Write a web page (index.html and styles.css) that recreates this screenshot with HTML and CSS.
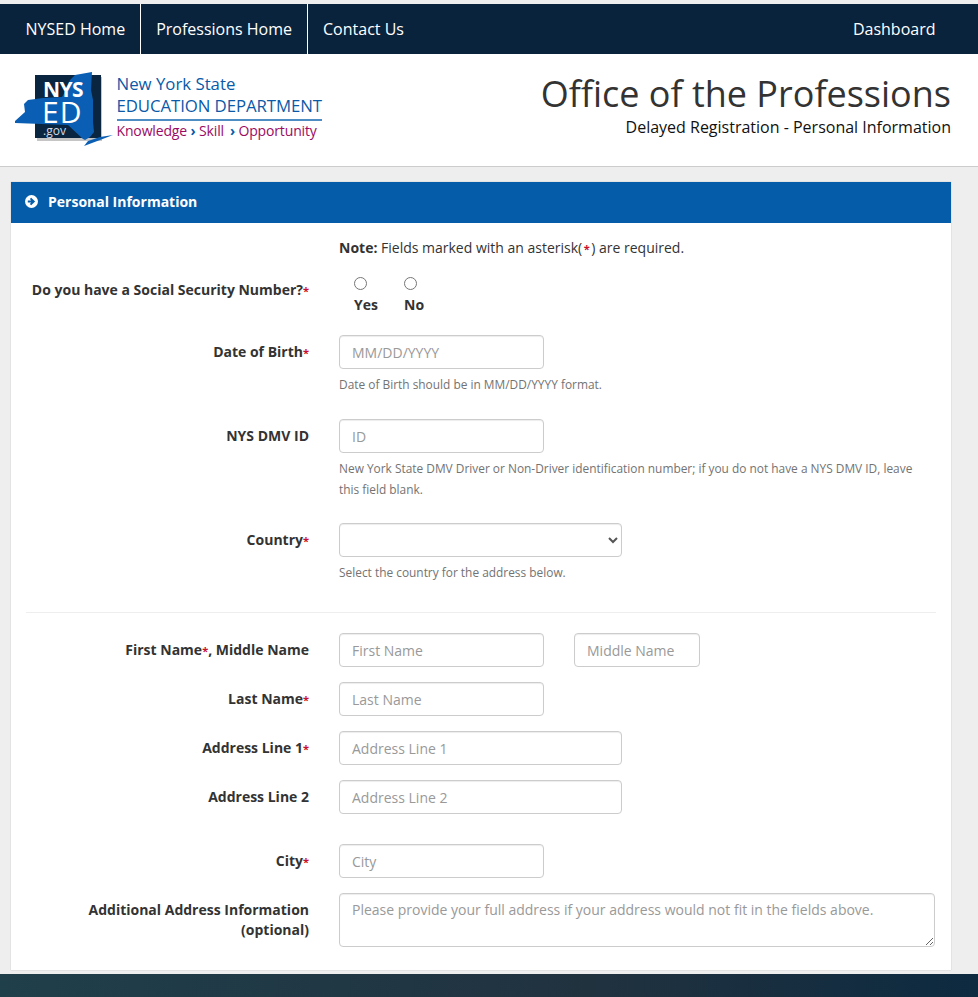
FILE: index.html
```html
<!DOCTYPE html>
<html lang="en">
<head>
<meta charset="utf-8">
<title>Office of the Professions</title>
<link rel="stylesheet" href="styles.css">
</head>
<body>
<nav class="topnav">
  <a class="navlink first" href="#">NYSED Home</a>
  <a class="navlink" href="#">Professions Home</a>
  <a class="navlink plain" href="#">Contact Us</a>
  <a class="navlink plain dash" href="#">Dashboard</a>
</nav>
<header class="masthead">
  <div class="logo">
    <svg class="logo-mark" viewBox="12 68 108 84" width="108" height="84" aria-hidden="true">
      <rect x="37" y="77" width="65" height="64" fill="#8c8c8c" opacity=".5"/>
      <rect x="35" y="75" width="66" height="63" fill="#0a2540"/>
      <path d="M84 146 L100 140 L113 135 L100 137 L88 141 Z" fill="#0a5fb4"/>
      <path d="M15 121 L25 112 L24 104 L28 100 L43 98 L62 97 L66 90 L70 80 L75 75 L92 72 L91 90 L93 100 L93 122 L94 132 L90 137 L85 140 L83 139 L68 125 L15 123 Z" fill="#0a5fb4"/>
      <text x="43" y="97" class="lm-nys">NYS</text>
      <text x="42" y="123" class="lm-ed">ED</text>
      <text x="43" y="135" class="lm-gov">.gov</text>
    </svg>
    <div class="logo-text">
      <div class="lt-1">New York State</div>
      <div class="lt-2">EDUCATION DEPARTMENT</div>
      <div class="lt-3"><span>Knowledge</span><span class="chev">›</span><span>Skill</span><span class="chev gap">›</span><span>Opportunity</span></div>
    </div>
  </div>
  <div class="titles">
    <h1>Office of the Professions</h1>
    <p>Delayed Registration - Personal Information</p>
  </div>
</header>
<main class="card">
  <div class="card-head">
    <svg class="arrow" viewBox="0 0 13 13" width="13" height="13" aria-hidden="true"><circle cx="6.500" cy="6.500" r="6.500" fill="#fff"/><path d="M2.800 5.400h3.400L4.900 4.100l1.300-1.300 3.900 3.700-3.900 3.700-1.300-1.300 1.300-1.300H2.800z" fill="#055ca9"/></svg>
    <span>Personal Information</span>
  </div>
  <form class="card-body">
    <div class="row note-row"><div></div><p class="note"><b>Note:</b> Fields marked with an asterisk(<i class="req">*</i>) are required.</p></div>
    <div class="row ssn-row">
      <div class="lbl">Do you have a Social Security Number?<i class="req">*</i></div>
      <div class="radios">
        <label class="radio"><input type="radio" name="ssn"><span>Yes</span></label>
        <label class="radio"><input type="radio" name="ssn"><span>No</span></label>
      </div>
    </div>
    <div class="row dob-row">
      <div class="lbl">Date of Birth<i class="req">*</i></div>
      <div><input class="ctl w205" placeholder="MM/DD/YYYY"><p class="help">Date of Birth should be in MM/DD/YYYY format.</p></div>
    </div>
    <div class="row dmv-row">
      <div class="lbl">NYS DMV ID</div>
      <div><input class="ctl w205" placeholder="ID"><p class="help">New York State DMV Driver or Non-Driver identification number; if you do not have a NYS DMV ID, leave this field blank.</p></div>
    </div>
    <div class="row country-row">
      <div class="lbl">Country<i class="req">*</i></div>
      <div><select class="ctl w283"><option></option></select><p class="help">Select the country for the address below.</p></div>
    </div>
    <hr class="sep">
    <div class="row name-row">
      <div class="lbl">First Name<i class="req">*</i>, Middle Name</div>
      <div class="pair"><input class="ctl w205" placeholder="First Name"><input class="ctl w126" placeholder="Middle Name"></div>
    </div>
    <div class="row line-row">
      <div class="lbl">Last Name<i class="req">*</i></div>
      <div><input class="ctl w205" placeholder="Last Name"></div>
    </div>
    <div class="row line-row">
      <div class="lbl">Address Line 1<i class="req">*</i></div>
      <div><input class="ctl w283" placeholder="Address Line 1"></div>
    </div>
    <div class="row line-row">
      <div class="lbl">Address Line 2</div>
      <div><input class="ctl w283" placeholder="Address Line 2"></div>
    </div>
    <div class="row city-row">
      <div class="lbl">City<i class="req">*</i></div>
      <div><input class="ctl w205" placeholder="City"></div>
    </div>
    <div class="row addl-row">
      <div class="lbl">Additional Address Information (optional)</div>
      <div><textarea class="ctl area" placeholder="Please provide your full address if your address would not fit in the fields above."></textarea></div>
    </div>
  </form>
</main>
<footer class="foot"></footer>
</body>
</html>
```
FILE: styles.css
```css
* { box-sizing: border-box; }
html, body { margin: 0; height: 997px; overflow: hidden; }
body { background: #eee; font-family: "Open Sans", sans-serif; font-size: 14px; color: #333; padding-top: 4px; display: flex; flex-direction: column; }

.topnav { height: 50px; background: #0a233d; display: flex; flex: none; }
.navlink { color: #fff; text-decoration: none; font-size: 16px; line-height: 50px; padding: 0 15px; border-right: 1px solid #fff; }
.navlink.first { padding-left: 25.500px; }
.navlink.plain { border-right: 0; }
.navlink.dash { margin-left: auto; margin-right: 27.500px; }

.masthead { height: 113px; flex: none; background: #fff; border-bottom: 1px solid #ccc; display: flex; justify-content: space-between; padding: 14px 27px 0 12px; }
.logo { display: flex; align-items: flex-start; }
.logo-mark { display: block; flex: none; }
.lm-nys { font-family: "Open Sans", sans-serif; font-weight: 700; font-size: 21px; fill: #fff; letter-spacing: -.6px; }
.lm-ed { font-family: "Open Sans", sans-serif; font-size: 30px; fill: #fff; letter-spacing: 1px; }
.lm-gov { font-family: "Open Sans", sans-serif; font-size: 12px; fill: #d5dbe2; }
.logo-text { margin: 5px 0 0 -3.500px; color: #0a5aa8; }
.lt-1 { font-size: 16.800px; line-height: 21px; }
.lt-2 { font-size: 16.800px; line-height: 23px; border-bottom: 2px solid #4e8cc4; padding-bottom: 2px; white-space: nowrap; letter-spacing: -.08px; }
.lt-3 { font-size: 14px; line-height: 19px; color: #9b0a63; white-space: nowrap; letter-spacing: -.15px; }
.chev { color: #0a5aa8; font-weight: 700; margin: 0 3.500px; }
.chev.gap { margin: 0 3.500px 0 6px; }
.titles { text-align: right; }
.titles h1 { margin: 1px 0 0; font-size: 36px; font-weight: 400; line-height: 50px; color: #333; }
.titles p { margin: -2px 0 0; font-size: 16px; line-height: 20px; color: #111; }

.card { flex: none; width: 940px; height: 788px; margin: 15px 0 0 11px; background: #fff; box-shadow: 0 0 1px rgba(0,0,0,.25); }
.card-head { height: 41px; background: #055ca9; color: #fff; font-weight: 700; display: flex; align-items: center; gap: 10px; padding-left: 14px; padding-bottom: 2px; }
.arrow { display: block; }
.card-body { padding: 0 15px; }

.row { display: grid; grid-template-columns: 283px 1fr; column-gap: 30px; }
.lbl { font-weight: 700; text-align: right; color: #333; line-height: 20px; padding-top: 7px; }
.req { color: #c8102e; font-style: normal; font-weight: 700; display: inline-block; font-size: 11px; width: 6px; text-align: center; }
.note-row { padding-top: 15px; height: 46px; }
.note { margin: 0; line-height: 20px; }
.note .req { width: 9px; }
.ssn-row { height: 66px; }
.ssn-row .lbl { padding-top: 11px; }
.radios { display: flex; gap: 10px; padding-top: 8px; }
.radio { display: flex; flex-direction: column; align-items: flex-start; padding-left: 15px; font-weight: 700; width: 40px; }
.radio input { margin: 0; width: 13px; height: 13px; }
.radio span { margin-top: 5px; line-height: 20px; }
.ctl { display: block; height: 34px; padding: 6px 12px; font-family: inherit; font-size: 14px; color: #555; background: #fff; border: 1px solid #ccc; border-radius: 4px; box-shadow: inset 0 1px 1px rgba(0,0,0,.075); }
.ctl::placeholder { color: #999; }
.w205 { width: 205px; }
.w283 { width: 283px; }
.w126 { width: 126px; }
.area { width: 596px; height: 54px; resize: vertical; }
.help { margin: 5px 0 0; max-width: 585px; font-size: 11.900px; line-height: 21px; color: #737373; }
.dob-row { height: 84px; }
.dmv-row { height: 104px; }
.country-row { height: 89px; }
.sep { margin: 0 0 20px; border: 0; border-top: 1px solid #eee; }
.name-row, .line-row { height: 49px; }
.pair { display: flex; gap: 30px; }
.city-row { height: 49px; margin-top: 15px; }

.foot { flex: 1; background: linear-gradient(90deg, #1f3f4b, #21323f 60%, #0d2a40); margin-top: 4px; }
```
